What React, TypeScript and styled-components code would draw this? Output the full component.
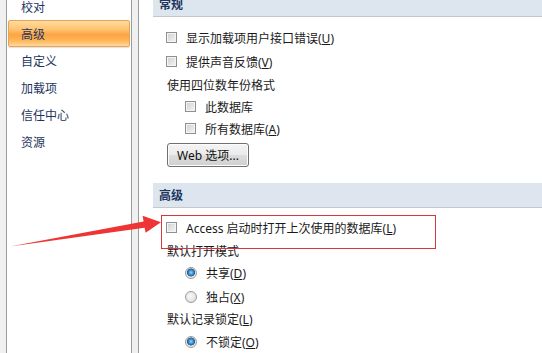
import React from "react";
import styled, { createGlobalStyle } from "styled-components";

const Global = createGlobalStyle`
  html, body { margin: 0; padding: 0; background: #f0f0f0; }
  body { font-family: "Noto Sans", "Noto Sans CJK SC", sans-serif; }
`;

const FONT = `"Noto Sans", "Noto Sans CJK SC", sans-serif`;

const Page = styled.div`
  position: relative;
  width: 542px;
  height: 353px;
  overflow: hidden;
  display: flex;
  background: #f0f0f0;
  padding-left: 6px;
  box-sizing: border-box;
  font-family: ${FONT};
  font-size: 12px;
`;

const Nav = styled.nav`
  width: 126px;
  flex: none;
  box-sizing: border-box;
  background: #ffffff;
  border-left: 1px solid #9c9c9c;
  border-right: 1px solid #9c9c9c;
  overflow: hidden;
`;

const NavList = styled.ul`
  list-style: none;
  margin: -7px 0 0;
  padding: 0 1px;
  display: flex;
  flex-direction: column;
`;

const NavItem = styled.li<{ $active?: boolean }>`
  height: 27px;
  box-sizing: border-box;
  display: flex;
  align-items: center;
  padding-left: 12px;
  color: #1e3560;
  border-radius: 2px;
  border: 1px solid ${(p) => (p.$active ? "#e3a359" : "transparent")};
  background: ${(p) =>
    p.$active
      ? "linear-gradient(to bottom, #ffdca0 0%, #ffc26e 35%, #fda445 55%, #ffb959 80%, #ffd9a0 100%)"
      : "transparent"};
  box-shadow: ${(p) => (p.$active ? "0 1px 1px rgba(0,0,0,0.12)" : "none")};
`;

const Gap = styled.div`
  width: 6px;
  flex: none;
`;

const Panel = styled.main`
  flex: 1;
  background: #ffffff;
  border-left: 1px solid #9c9c9c;
  padding-left: 14px;
  overflow: hidden;
  color: #1a1a1a;
`;

const Content = styled.div`
  margin-top: -8px;
  display: flex;
  flex-direction: column;
`;

const SectionHeader = styled.div`
  height: 24px;
  box-sizing: content-box;
  background: #dde6ee;
  border-bottom: 1px solid #c4c7cb;
  display: flex;
  align-items: center;
  padding-left: 6px;
  font-weight: bold;
  color: #1e3560;
  font-size: 12px;
`;

const Row = styled.div<{ $indent: number; $top?: number }>`
  height: 23px;
  display: flex;
  align-items: center;
  padding-left: ${(p) => p.$indent}px;
  margin-top: ${(p) => p.$top ?? 0}px;
  gap: 9px;
  white-space: nowrap;
`;

const Box = styled.span`
  width: 11px;
  height: 11px;
  flex: none;
  box-sizing: border-box;
  border: 1px solid #8e8f8f;
  background: linear-gradient(135deg, #cfcfcf 0%, #e6e6e6 60%, #f6f6f6 100%);
  box-shadow: inset 0 0 0 1px #f4f4f4;
`;

const Radio = styled.span<{ $on?: boolean }>`
  width: 12px;
  height: 12px;
  flex: none;
  box-sizing: border-box;
  border-radius: 50%;
  border: 1px solid #9a9a9a;
  background: ${(p) =>
    p.$on
      ? "radial-gradient(circle at 50% 45%, #9fd4f5 0%, #2f86c8 35%, #1c5a93 50%, #e6e6e6 58%, #f6f6f6 100%)"
      : "radial-gradient(circle at 40% 40%, #f8f8f8 0%, #e2e2e2 70%, #d0d0d0 100%)"};
`;

const U = styled.span`
  text-decoration: underline;
`;

const Button = styled.button`
  margin: 3px 0 0 14px;
  width: 82px;
  height: 24px;
  box-sizing: border-box;
  border: 1px solid #707070;
  border-radius: 3px;
  background: linear-gradient(to bottom, #f4f4f4 0%, #ebebeb 50%, #dddddd 51%, #d0d0d0 100%);
  box-shadow: inset 0 0 0 1px #fcfcfc;
  font-family: ${FONT};
  font-size: 12px;
  color: #111;
  padding: 0;
  display: flex;
  align-items: center;
  justify-content: center;
`;

const Spacer = styled.div<{ $h: number }>`
  height: ${(p) => p.$h}px;
`;

const Annotation = styled.div`
  position: absolute;
  left: 161px;
  top: 215px;
  width: 275px;
  height: 34px;
  box-sizing: border-box;
  border: 1px solid #d7383e;
  pointer-events: none;
`;

const ArrowSvg = styled.svg`
  position: absolute;
  left: 0;
  top: 0;
  pointer-events: none;
`;

export default function App() {
  const nav = ["校对", "高级", "自定义", "加载项", "信任中心", "资源"];
  return (
    <>
      <Global />
      <Page>
        <Nav>
          <NavList>
            {nav.map((n) => (
              <NavItem key={n} $active={n === "高级"}>
                {n}
              </NavItem>
            ))}
          </NavList>
        </Nav>
        <Gap />
        <Panel>
          <Content>
            <SectionHeader>常规</SectionHeader>
            <Spacer $h={9} />
            <Row $indent={13}>
              <Box />
              <span>
                显示加载项用户接口错误(<U>U</U>)
              </span>
            </Row>
            <Row $indent={13} $top={1}>
              <Box />
              <span>
                提供声音反馈(<U>V</U>)
              </span>
            </Row>
            <Row $indent={14}>使用四位数年份格式</Row>
            <Row $indent={32} $top={-1}>
              <Box />
              <span>此数据库</span>
            </Row>
            <Row $indent={32} $top={-1}>
              <Box />
              <span>
                所有数据库(<U>A</U>)
              </span>
            </Row>
            <Button>Web 选项...</Button>
            <Spacer $h={16} />
            <SectionHeader>高级</SectionHeader>
            <Spacer $h={8} />
            <Row $indent={13}>
              <Box />
              <span>
                Access 启动时打开上次使用的数据库(<U>L</U>)
              </span>
            </Row>
            <Row $indent={14}>默认打开模式</Row>
            <Row $indent={32} $top={-1}>
              <Radio $on />
              <span>
                共享(<U>D</U>)
              </span>
            </Row>
            <Row $indent={32} $top={1}>
              <Radio />
              <span>
                独占(<U>X</U>)
              </span>
            </Row>
            <Row $indent={14} $top={-1}>
              <span>
                默认记录锁定(<U>L</U>)
              </span>
            </Row>
            <Row $indent={32}>
              <Radio $on />
              <span>
                不锁定(<U>O</U>)
              </span>
            </Row>
          </Content>
        </Panel>
        <Annotation />
        <ArrowSvg width="542" height="353" viewBox="0 0 542 353">
          <polygon
            points="10,246.5 143.6,221.5 142.6,215.8 161,222.2 145.6,232.8 144.6,227.8"
            fill="#ee3434"
          />
        </ArrowSvg>
      </Page>
    </>
  );
}
